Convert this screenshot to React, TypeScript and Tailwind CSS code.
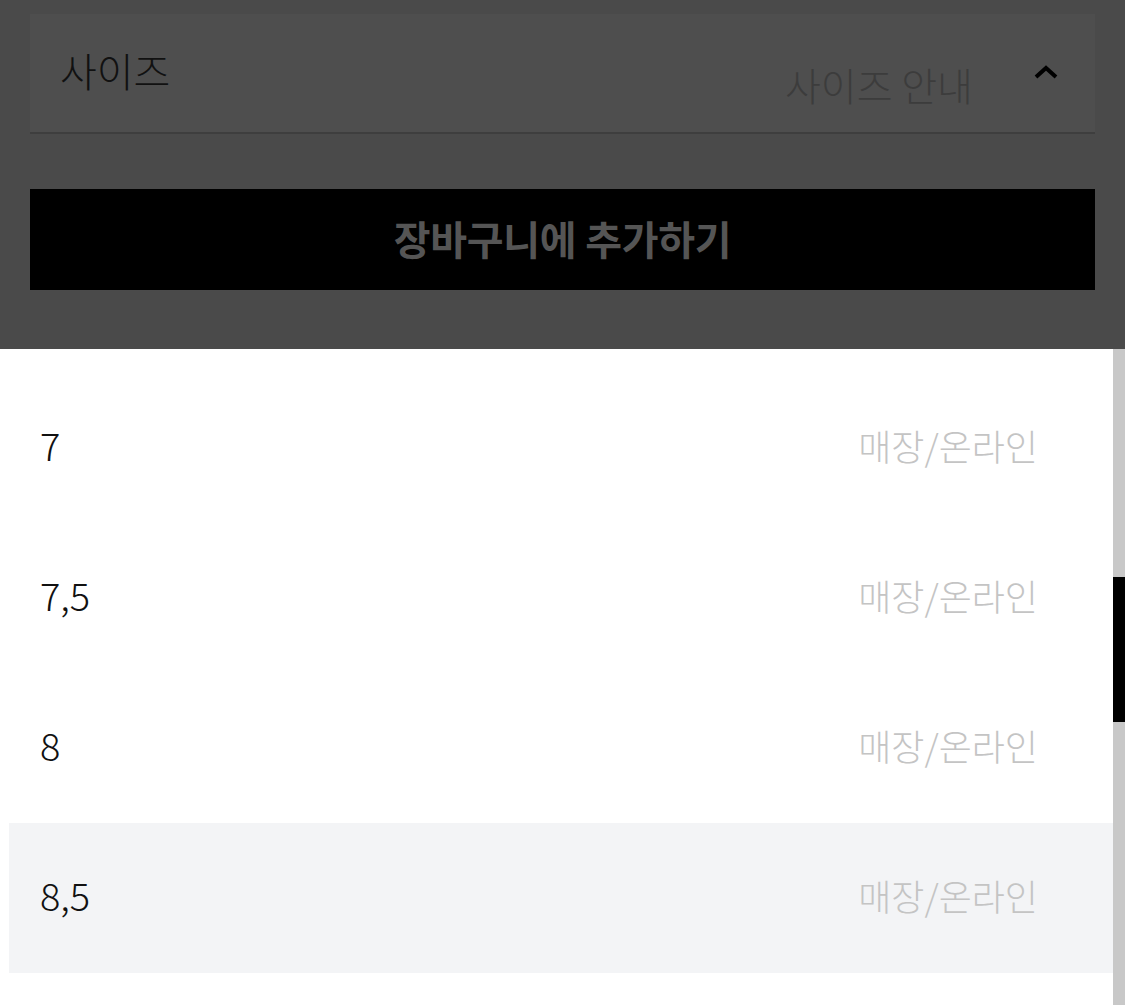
import React from "react";

const font = { fontFamily: '"Noto Sans CJK KR", "Noto Sans", sans-serif' };

const rows = [
  { size: "7", active: false },
  { size: "7,5", active: false },
  { size: "8", active: false },
  { size: "8,5", active: true },
];

export default function App() {
  return (
    <div className="w-[1125px] h-[1005px] overflow-hidden bg-white flex flex-col" style={font}>
      <div className="h-[349px] shrink-0 bg-[#4a4a4a] px-[30px] pt-[14px] flex flex-col">
        <div className="h-[120px] bg-[#4e4e4e] border-b-2 border-[#3e3e3e] flex items-center pl-[30px] pr-[36px]">
          <span className="text-[40px] leading-none font-light text-[#111111] -mt-[6px]">사이즈</span>
          <span className="ml-auto text-[39px] leading-none font-light text-[#3c3c3c] mt-[22px]">사이즈 안내</span>
          <svg className="ml-[60px] -mt-[2px]" width="26" height="16" viewBox="0 0 26 16">
            <polyline points="3,13 13,4 23,13" fill="none" stroke="#000" strokeWidth="4" />
          </svg>
        </div>
        <div className="mt-[55px] h-[101px] bg-black flex items-center justify-center">
          <span className="text-[40px] font-bold text-[#555555] leading-none -mt-[4px] tracking-[-0.3px]">장바구니에 추가하기</span>
        </div>
      </div>
      <div className="flex-1 flex min-h-0">
        <div className="flex-1 pl-[9px] pt-[24px] flex flex-col">
          {rows.map((r) => (
            <div
              key={r.size}
              className={`h-[150px] shrink-0 flex items-center pl-[31px] pr-[75px] ${r.active ? "bg-[#f3f4f6]" : ""}`}
            >
              <span className="text-[38px] leading-none font-light text-[#111111] -mt-[6px]">{r.size}</span>
              <span className="ml-auto text-[36px] leading-none font-light text-[#c4c4c4] -mt-[6px]">매장/온라인</span>
            </div>
          ))}
        </div>
        <div className="w-[12px] shrink-0 bg-[#c8c8c8] flex flex-col">
          <div className="mt-[228px] h-[145px] bg-black" />
        </div>
      </div>
    </div>
  );
}
